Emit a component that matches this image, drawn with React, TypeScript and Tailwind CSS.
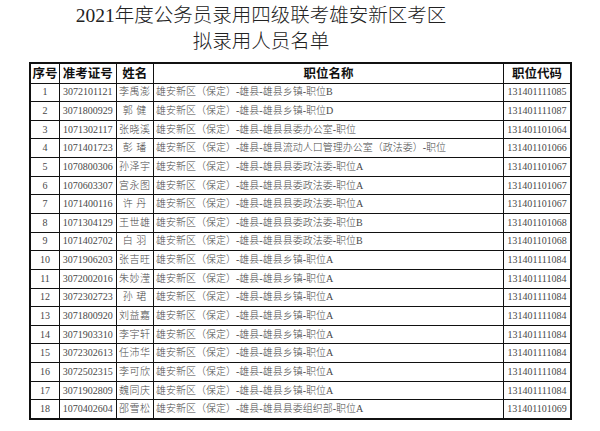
const rows: [string, string, string, string][] = [
  ["3072101121", "李禹澎", "雄安新区（保定）-雄县-雄县乡镇-职位B", "131401111085"],
  ["3071800929", "郭 健", "雄安新区（保定）-雄县-雄县乡镇-职位D", "131401111087"],
  ["1071302117", "张晓溪", "雄安新区（保定）-雄县-雄县县委办公室-职位", "131401101064"],
  ["1071401723", "彭 璠", "雄安新区（保定）-雄县-雄县流动人口管理办公室（政法委）-职位", "131401101066"],
  ["1070800306", "孙泽宇", "雄安新区（保定）-雄县-雄县县委政法委-职位A", "131401101067"],
  ["1070603307", "宫永图", "雄安新区（保定）-雄县-雄县县委政法委-职位A", "131401101067"],
  ["1071400116", "许 丹", "雄安新区（保定）-雄县-雄县县委政法委-职位A", "131401101067"],
  ["1071304129", "王世雄", "雄安新区（保定）-雄县-雄县县委政法委-职位B", "131401101068"],
  ["1071402702", "白 羽", "雄安新区（保定）-雄县-雄县县委政法委-职位B", "131401101068"],
  ["3071906203", "张吉旺", "雄安新区（保定）-雄县-雄县乡镇-职位A", "131401111084"],
  ["3072002016", "朱妙滢", "雄安新区（保定）-雄县-雄县乡镇-职位A", "131401111084"],
  ["3072302723", "孙 珺", "雄安新区（保定）-雄县-雄县乡镇-职位A", "131401111084"],
  ["3071800920", "刘益嘉", "雄安新区（保定）-雄县-雄县乡镇-职位A", "131401111084"],
  ["3071903310", "李宇轩", "雄安新区（保定）-雄县-雄县乡镇-职位A", "131401111084"],
  ["3072302613", "任沛华", "雄安新区（保定）-雄县-雄县乡镇-职位A", "131401111084"],
  ["3072502315", "李可欣", "雄安新区（保定）-雄县-雄县乡镇-职位A", "131401111084"],
  ["3071902809", "魏同庆", "雄安新区（保定）-雄县-雄县乡镇-职位A", "131401111084"],
  ["1070402604", "邵雪松", "雄安新区（保定）-雄县-雄县县委组织部-职位A", "131401101069"],
];

const serif = "font-['Liberation_Serif','Noto_Sans_CJK_SC',serif]";

export default function App() {
  return (
    <div className="w-[600px] h-[431px] bg-white overflow-hidden">
      {/* title sits a little left of the table centre in the scan */}
      <div
        className={`pr-[78px] pt-[3px] text-center text-[19.5px] leading-[26px] font-light text-[#222] ${serif}`}
      >
        <div>2021年度公务员录用四级联考雄安新区考区</div>
        <div>拟录用人员名单</div>
      </div>

      <table className="mt-[7px] ml-[29px] w-[541px] table-fixed border-collapse border-[2px] border-[#111]">
        <colgroup>
          <col className="w-[29.5px]" />
          <col className="w-[56.5px]" />
          <col className="w-[37.5px]" />
          <col className="w-[350px]" />
          <col className="w-[67.5px]" />
        </colgroup>
        <thead>
          <tr className="h-[20px] text-[12.5px] font-bold text-[#111] font-['Noto_Sans_CJK_SC',sans-serif]">
            {["序号", "准考证号", "姓名", "职位名称", "职位代码"].map((h) => (
              <th key={h} className="border-[1.5px] border-[#111] p-0 text-center leading-none whitespace-nowrap">
                {h}
              </th>
            ))}
          </tr>
        </thead>
        <tbody className={`text-[10px] font-light text-[#484848] ${serif}`}>
          {rows.map(([id, name, post, code], i) => (
            <tr key={id} className="h-[18.65px]">
              <td className="border-[1.5px] border-[#111] p-0 text-center leading-none">{i + 1}</td>
              <td className="border-[1.5px] border-[#111] p-0 text-center leading-none">{id}</td>
              <td className="border-[1.5px] border-[#111] p-0 text-center leading-none whitespace-pre tracking-[0.5px]">{name}</td>
              <td className="border-[1.5px] border-[#111] py-0 pl-[2px] text-left leading-none whitespace-nowrap">{post}</td>
              <td className="border-[1.5px] border-[#111] p-0 text-center leading-none">{code}</td>
            </tr>
          ))}
        </tbody>
      </table>
    </div>
  );
}
